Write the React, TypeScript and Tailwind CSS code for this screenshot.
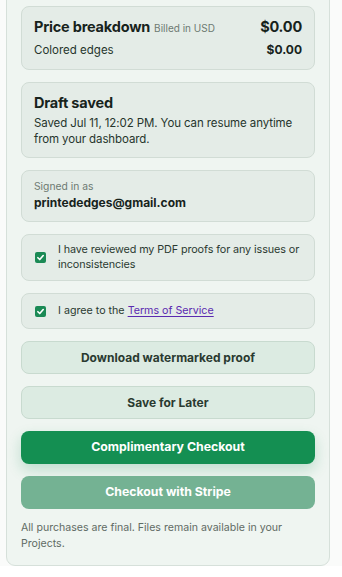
import React from 'react';

const Check: React.FC = () => (
  <span className="flex h-[11px] w-[11px] shrink-0 items-center justify-center rounded-[2px] bg-[#1b8a55]">
    <svg viewBox="0 0 12 12" className="h-[9px] w-[9px]" fill="none" stroke="white" strokeWidth="2.2" strokeLinecap="round" strokeLinejoin="round">
      <path d="M2.5 6.3 5 8.7 9.6 3.4" />
    </svg>
  </span>
);

export default function App() {
  return (
    <div className="min-h-[577px] bg-[#fafbfa] px-[6px] text-[#1d2a22]" style={{ fontFamily: 'Inter, "Noto Sans", sans-serif' }}>
      <div className="-mt-[20px] flex w-[324px] flex-col rounded-b-[9px] border border-[#d6e0da] bg-[#eff5f1] px-[14px] pb-[13px] pt-[25px]">
        <div className="flex flex-col gap-3">
          {/* Price breakdown */}
          <div className="flex flex-col gap-[3px] rounded-[8px] border border-[#d1dcd5] bg-[#e4ece7] px-3 py-[10px]">
            <div className="flex items-baseline justify-between leading-5">
              <div className="flex items-baseline gap-1">
                <span className="text-[14.5px] font-bold tracking-[-0.2px] text-[#17231c]">Price breakdown</span>
                <span className="text-[10px] text-[#6d7a72]">Billed in USD</span>
              </div>
              <span className="text-[14.5px] font-bold tracking-[-0.2px] text-[#17231c]">$0.00</span>
            </div>
            <div className="flex items-baseline justify-between leading-[18px]">
              <span className="text-[11.5px] text-[#26352c]">Colored edges</span>
              <span className="text-[12px] font-bold text-[#17231c]">$0.00</span>
            </div>
          </div>

          {/* Draft saved */}
          <div className="flex flex-col gap-[2px] rounded-[8px] border border-[#d1dcd5] bg-[#e4ece7] px-3 py-[10px]">
            <span className="text-[14.5px] font-bold leading-5 tracking-[-0.2px] text-[#17231c]">Draft saved</span>
            <p className="text-[11.5px] leading-[16px] tracking-[-0.1px] text-[#26352c]">
              Saved Jul 11, 12:02 PM. You can resume anytime from your dashboard.
            </p>
          </div>

          {/* Signed in */}
          <div className="flex flex-col rounded-[8px] border border-[#d1dcd5] bg-[#e4ece7] px-3 py-2">
            <span className="text-[10.3px] leading-[14px] text-[#6d7a72]">Signed in as</span>
            <span className="text-[12px] font-bold leading-[20px] text-[#17231c]">printededges@gmail.com</span>
          </div>

          {/* Proof review */}
          <label className="flex items-center gap-3 rounded-[8px] border border-[#d1dcd5] bg-[#e4ece7] py-2 pl-[13px] pr-2">
            <Check />
            <span className="flex flex-col text-[10.8px] leading-[14.5px] tracking-[-0.1px] text-[#2b3a31]">
              <span className="whitespace-nowrap">I have reviewed my PDF proofs for any issues or</span>
              <span>inconsistencies</span>
            </span>
          </label>

          {/* Terms */}
          <label className="flex min-h-[36px] items-center gap-3 rounded-[8px] border border-[#d1dcd5] bg-[#e4ece7] py-2 pl-[13px] pr-3">
            <Check />
            <span className="text-[10.7px] leading-[18px] text-[#2b3a31]">
              I agree to the{' '}
              <a href="#" className="text-[#5b2ab0] underline underline-offset-2">Terms of Service</a>
            </span>
          </label>

          <button className="h-[33px] rounded-[8px] border border-[#c8dacf] bg-[#dcebe2] text-[12px] font-bold text-[#2a3a30]">
            Download watermarked proof
          </button>
          <button className="h-[33px] rounded-[8px] border border-[#c8dacf] bg-[#dcebe2] text-[12px] font-bold text-[#2a3a30]">
            Save for Later
          </button>
          <button className="h-[33px] rounded-[8px] bg-[#148f52] text-[12.3px] font-bold text-white shadow-[0_6px_14px_rgba(20,143,82,0.22)]">
            Complimentary Checkout
          </button>
          <button className="h-[33px] rounded-[8px] bg-[#74b293] text-[12.3px] font-bold text-white">
            Checkout with Stripe
          </button>
        </div>
        <p className="mt-[11px] text-[10.6px] leading-4 text-[#5f6b64]">
          All purchases are final. Files remain available in your Projects.
        </p>
      </div>
    </div>
  );
}
